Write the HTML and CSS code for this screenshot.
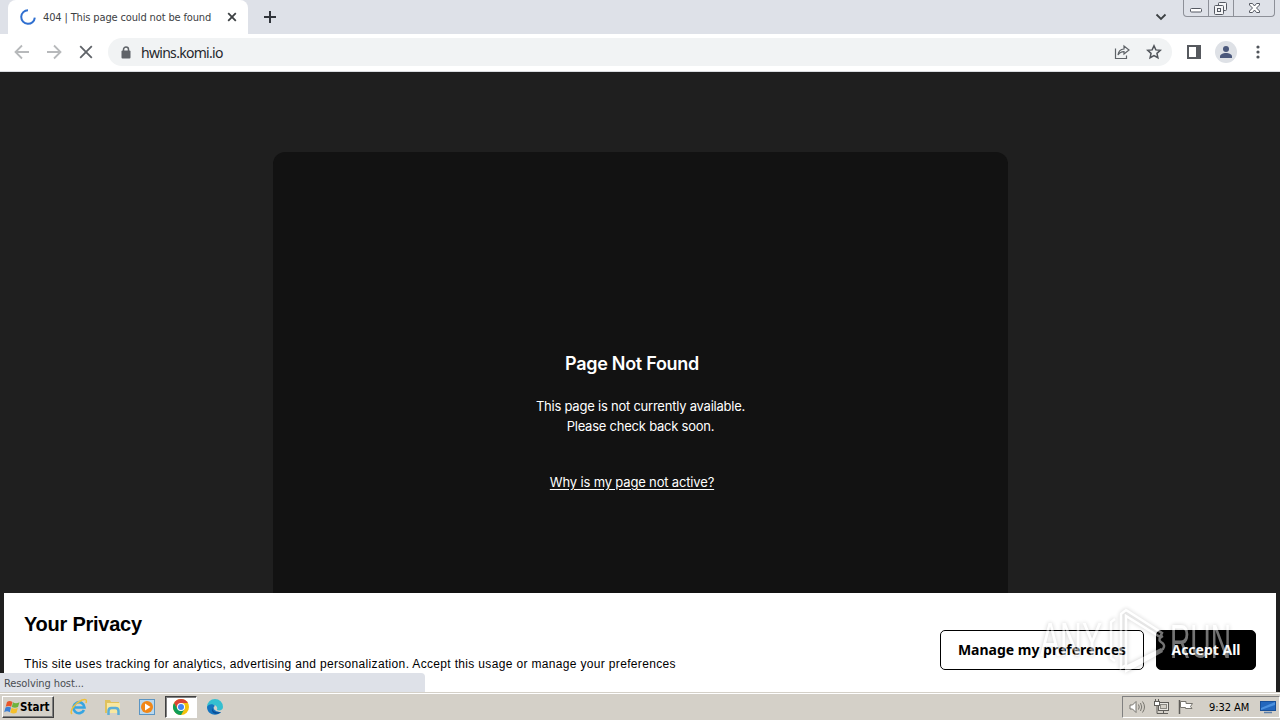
FILE: index.html
```html
<!DOCTYPE html>
<html lang="en">
<head>
    <meta charset="UTF-8">
    <title>404 | This page could not be found</title>
    <link rel="stylesheet" href="styles.css">
</head>
<body>
    <div class="tab-strip">
        <div class="tab">
            <svg class="spinner" width="16" height="16" viewBox="0 0 16 16"><path d="M8 1.200A6.800 6.800 0 1 0 14.800 8.600" fill="none" stroke="#2f6fd0" stroke-width="2"/></svg>
            <span class="tab-title">404 | This page could not be found</span>
            <svg class="tab-close" width="10" height="10" viewBox="0 0 10 10"><path d="M1.200 1.200l7.600 7.600M8.800 1.200L1.200 8.800" stroke="#3c4043" stroke-width="1.800"/></svg>
        </div>
        <svg class="new-tab" width="12" height="12" viewBox="0 0 12 12"><path d="M6 0v12M0 6h12" stroke="#30343a" stroke-width="2"/></svg>
        <svg class="tab-search" width="12" height="8" viewBox="0 0 12 8"><path d="M1.500 1.500L6 6l4.500-4.500" fill="none" stroke="#3c4043" stroke-width="1.800"/></svg>
        <div class="window-buttons">
            <span><svg width="24" height="16" viewBox="0 0 24 16"><rect x="6.500" y="8.500" width="11" height="3.500" rx="1" fill="#fff" stroke="#555962"/></svg></span>
            <span><svg width="24" height="16" viewBox="0 0 24 16"><g fill="#f4f5f7" stroke="#555962"><rect x="9.500" y="2.500" width="8" height="8" rx="1"/><rect x="5.500" y="5.500" width="9" height="9" rx="1"/><rect x="8.500" y="8.500" width="3" height="3"/></g></svg></span>
            <span><svg width="40" height="16" viewBox="0 0 40 16"><path d="M15.500 3.500h3l2 2.500 2-2.500h3v1.500l-3 3 3 3v1.500h-3l-2-2.500-2 2.500h-3V11l3-3-3-3z" fill="#fff" stroke="#555962"/></svg></span>
        </div>
    </div>

    <div class="toolbar">
        <svg width="16" height="16" viewBox="0 0 16 16"><path d="M15 8H2M8 1.500L1.500 8 8 14.500" fill="none" stroke="#b7b9bb" stroke-width="1.800"/></svg>
        <svg width="16" height="16" viewBox="0 0 16 16"><path d="M1 8h13M8 1.500L14.500 8 8 14.500" fill="none" stroke="#b7b9bb" stroke-width="1.800"/></svg>
        <svg width="16" height="16" viewBox="0 0 16 16"><path d="M2.200 2.200l11.600 11.600M13.800 2.200L2.200 13.800" stroke="#5f6368" stroke-width="1.800"/></svg>
        <div class="address">
            <svg class="lock" width="10" height="13" viewBox="0 0 10 13"><path d="M2.500 6V3.500a2.500 2.500 0 0 1 5 0V6" fill="none" stroke="#5f6368" stroke-width="1.500"/><rect x="0.500" y="4.500" width="9" height="8" rx="1" fill="#5f6368"/></svg>
            <span class="url">hwins.komi.io</span>
            <svg class="share" width="16" height="16" viewBox="0 0 16 16"><path d="M1.500 4.500v10h11v-3M4 11c.5-4 2.500-5.800 6-6V2l5 4-5 4V7.700c-2.500 0-4.500.9-6 3.300z" fill="none" stroke="#5f6368" stroke-width="1.200"/></svg>
            <svg class="star" width="16" height="16" viewBox="0 0 16 16"><path d="M8 1.800l1.850 4.100 4.450.45-3.350 3 .95 4.400L8 11.500l-3.900 2.250.95-4.400-3.350-3 4.450-.45z" fill="none" stroke="#50545a" stroke-width="1.500"/></svg>
        </div>
        <svg class="side-panel" width="14" height="14" viewBox="0 0 14 14"><path d="M0 0h14v14H0zM2 2v10h7V2z" fill="#56595e" fill-rule="evenodd"/></svg>
        <svg class="profile" width="22" height="22" viewBox="0 0 22 22"><circle cx="11" cy="11" r="11" fill="#dee1e6"/><circle cx="11" cy="8" r="3" fill="#4b587c"/><path d="M5 17v-1.500c0-2 3-3.500 6-3.500s6 1.500 6 3.500V17z" fill="#4b587c"/></svg>
        <svg class="menu" width="4" height="14" viewBox="0 0 4 14"><g fill="#50545a"><circle cx="2" cy="2" r="1.600"/><circle cx="2" cy="7" r="1.600"/><circle cx="2" cy="12" r="1.600"/></g></svg>
    </div>

    <div class="page">
        <div class="card">
            <h1>Page Not Found</h1>
            <p>This page is not currently available.<br>Please check back soon.</p>
            <a class="why">Why is my page not active?</a>
        </div>

        <div class="privacy">
            <div class="privacy-text">
                <h2>Your Privacy</h2>
                <p>This site uses tracking for analytics, advertising and personalization. Accept this usage or manage your preferences</p>
            </div>
            <div class="btn manage">Manage my preferences</div>
            <div class="btn accept">Accept All</div>
        </div>

        <div class="status">Resolving host...</div>

        <svg class="watermark" width="220" height="74" viewBox="0 0 220 74">
            <text x="4" y="51" textLength="62" lengthAdjust="spacingAndGlyphs">ANY</text>
            <text x="134" y="53" textLength="61" lengthAdjust="spacingAndGlyphs">RUN</text>
            <path class="fold" d="M89 61l36-18 2 4-38 21z"/>
            <path d="M79 14l-4 3v36l4 3M85 60V9l5-4 36 23-2 4-34-21v49l-5 3zM127 31q-6 3-2 6 5 3 2 7l-34 19"/>
        </svg>
    </div>

    <div class="taskbar">
        <div class="start">
            <svg width="16" height="16" viewBox="0 0 16 16"><path d="M3 3q2.500-2 5.500 0L7.200 7.800Q4.500 6 1.700 7.800z" fill="#e8562a"/><path d="M9 3.300q2.500 1.700 6.500 0L14 8q-3 1.500-6.200 0z" fill="#6fb33b"/><path d="M1.500 8.500q2.500-1.500 5.500 0L5.800 13.200Q3 11.500.2 13.200z" fill="#3b7fd4"/><path d="M7.600 8.800q2.500 1.700 6.200.2L12.500 13.800q-3 1.500-6.200-.2z" fill="#f5bf2b"/></svg>
            <span>Start</span>
        </div>
        <div class="apps">
            <svg width="18" height="18" viewBox="0 0 18 18"><path d="M14 12A5.500 5.500 0 1 1 14.500 9.500H5" fill="none" stroke="#36a5e2" stroke-width="2.600"/><path d="M2 16C-1 13 5 5 12 2c4-1.500 5 0 4 3" fill="none" stroke="#efc038" stroke-width="1.500"/></svg>
            <svg width="18" height="18" viewBox="0 0 18 18"><path d="M1 2h5l1 2h8v11H1z" fill="#e0c25c"/><path d="M3 5h13v10H3z" fill="#f8e7a0"/><path d="M4.500 17v-4q0-3 3-3h4q3 0 3 3v4" fill="none" stroke="#5aaed8" stroke-width="2.500"/></svg>
            <svg width="18" height="18" viewBox="0 0 18 18"><rect x="1.500" y="1.500" width="15" height="15" fill="#b9d8ee" stroke="#5b95c3"/><circle cx="9" cy="9" r="6" fill="#f18717"/><path d="M7 5.500l5.500 3.500L7 12.500z" fill="#fff"/></svg>
            <div class="app-active"><svg width="18" height="18" viewBox="0 0 18 18"><circle cx="9" cy="9" r="8" fill="#f4c20d"/><path d="M2.070 5A8 8 0 0 1 15.930 5H9L5.500 11z" fill="#db4437"/><path d="M2.070 5A8 8 0 0 0 9 17l3.500-6h-7z" fill="#0f9d58"/><circle cx="9" cy="9" r="4" fill="#fff"/><circle cx="9" cy="9" r="3" fill="#4285f4"/></svg></div>
            <svg width="18" height="18" viewBox="0 0 18 18"><path d="M1 9a8 8 0 0 1 16 0c0 3-3 4-6 3 1-3-1-5-4-5-3 0-5 1-6 3z" fill="#35bfd0"/><path d="M1 9c1-3 6-4 8-1-3 1-1 6 6 6-4 5-14 3-14-5z" fill="#1474bf"/><path d="M7 8.500c-2 3 1 7 8 5.500-4 4-12 1-8-5.500z" fill="#0b4e96"/></svg>
        </div>
        <div class="tray">
            <svg width="17" height="16" viewBox="0 0 17 16"><path d="M1 6h2.500L7 2.500v11L3.500 10H1z" fill="#fff" stroke="#77756f"/><path d="M9.500 5.500q1.500 2.500 0 5M11.500 4q2.500 4 0 8M13.500 2.500q4 5.500 0 11" fill="none" stroke="#77756f"/></svg>
            <svg width="16" height="16" viewBox="0 0 16 16"><rect x="4.500" y="3.500" width="10" height="8" fill="#e9e7e2" stroke="#5f5d59"/><rect x="6.500" y="5.500" width="6" height="4" fill="#d4d0c8" stroke="#8b8983"/><path d="M6 14.500h8M9.500 12v2M1.500 0v3M4.500 0v3M3 6v8.500h3" fill="none" stroke="#5f5d59"/><rect x="0.500" y="2.500" width="5" height="4" fill="#fff" stroke="#5f5d59"/></svg>
            <svg width="17" height="16" viewBox="0 0 17 16"><path d="M1.500 1v14" stroke="#5f5d59" stroke-width="1.500"/><path d="M2.500 2.500H8v2h6.500l-2 3 1.500 2H7.500v-1h-5z" fill="#fff" stroke="#77756f"/></svg>
            <span class="clock">9:32 AM</span>
            <svg width="16" height="14" viewBox="0 0 16 14"><rect x="0.500" y="1.500" width="15" height="9" fill="#2367bd" stroke="#174f99"/><path d="M1 8L15 2v3L1 10z" fill="#4b91df"/><path d="M4 12.500h8" stroke="#5d7fa8" stroke-width="1.500"/></svg>
        </div>
    </div>
</body>
</html>
```

FILE: styles.css
```css
* {
    box-sizing: border-box;
}

body {
    margin: 0;
    width: 1280px;
    height: 720px;
    overflow: hidden;
    display: flex;
    flex-direction: column;
    font-family: "Liberation Sans", Arial, sans-serif;
    white-space: nowrap;
}

svg {
    display: block;
    flex: none;
}

h1, h2, p {
    margin: 0;
}

/* Browser tabs */
.tab-strip {
    height: 34px;
    flex: none;
    display: flex;
    background-color: #dee1e8;
    padding-left: 8px;
}

.tab {
    width: 240px;
    height: 34px;
    display: flex;
    align-items: center;
    background-color: #ffffff;
    border-radius: 8px 8px 0 0;
    padding-left: 12px;
}

.tab-title {
    width: 184px;
    margin-left: 7px;
    font-family: "DejaVu Sans Condensed", "DejaVu Sans", sans-serif;
    font-stretch: condensed;
    font-size: 11px;
    letter-spacing: -0.14px;
    color: #3c4043;
}

.new-tab {
    margin: 11px 0 0 16px;
}

.tab-search {
    margin: 13px 16px 0 auto;
}

.window-buttons {
    display: flex;
    height: 17px;
    margin-right: 5px;
    border: 1px solid #8d9098;
    border-top: none;
    border-radius: 0 0 4px 4px;
}

.window-buttons span + span {
    border-left: 1px solid #8d9098;
}

/* Address bar */
.toolbar {
    height: 38px;
    flex: none;
    display: flex;
    align-items: center;
    gap: 16px;
    padding-left: 14px;
    padding-bottom: 1px;
    background-color: #ffffff;
    border-bottom: 1px solid #dadce0;
}

.address {
    width: 1064px;
    height: 28px;
    margin-left: -2px;
    display: flex;
    align-items: center;
    border-radius: 14px;
    background-color: #f1f3f4;
    padding-left: 13px;
}

.url {
    margin-left: 10px;
    font-family: "Noto Sans", sans-serif;
    font-size: 14px;
    letter-spacing: -0.7px;
    color: #26282c;
}

.share {
    margin-left: auto;
}

.star {
    margin: 0 10px 0 16px;
}

.side-panel {
    margin-left: -1px;
}

.profile {
    margin-left: -2px;
}

.menu {
    margin-left: 3px;
}

/* Page content */
.page {
    position: relative;
    flex: 1;
    overflow: hidden;
    background-color: #1f1f1f;
    padding-top: 80px;
}

.card {
    width: 735px;
    height: 560px;
    margin-left: 273px;
    padding-top: 201px;
    border-radius: 12px;
    background-color: #121212;
    color: #ffffff;
    font-family: Inter, sans-serif;
}

.card h1 {
    width: 718px;
    font-size: 18px;
    line-height: 22px;
    font-weight: 600;
    letter-spacing: -0.28px;
    text-align: center;
}

.card p {
    margin-top: 21px;
    font-size: 13px;
    line-height: 20px;
    letter-spacing: -0.23px;
    text-align: center;
}

.why {
    display: block;
    width: 718px;
    margin-top: 36px;
    font-size: 13px;
    line-height: 20px;
    letter-spacing: -0.16px;
    text-align: center;
    text-decoration: underline;
    text-underline-offset: 2px;
}

.privacy {
    position: absolute;
    left: 4px;
    right: 4px;
    top: 521px;
    height: 99px;
    display: flex;
    align-items: flex-start;
    padding: 0 20px;
    background-color: #ffffff;
    color: #000000;
}

.privacy-text {
    flex: 1;
}

.privacy h2 {
    margin-top: 19px;
    font-size: 20px;
    line-height: 24px;
    font-weight: bold;
    letter-spacing: -0.25px;
}

.privacy p {
    margin-top: 20px;
    font-size: 12px;
    line-height: 16px;
    letter-spacing: 0.335px;
}

.btn {
    height: 40px;
    margin-top: 37px;
    display: flex;
    align-items: center;
    justify-content: center;
    border: 1px solid #000000;
    border-radius: 5px;
    padding-bottom: 2px;
    font-family: "Noto Sans", sans-serif;
    font-size: 14px;
    font-weight: bold;
}

.manage {
    width: 204px;
    margin-right: 12px;
}

.accept {
    width: 100px;
    background-color: #000000;
    color: #ffffff;
}

.status {
    position: absolute;
    left: 0;
    bottom: 0;
    width: 425px;
    height: 19px;
    padding-left: 4px;
    border-top-right-radius: 4px;
    background-color: #dee1e8;
    color: #4a4d52;
    font-family: "DejaVu Sans Condensed", "DejaVu Sans", sans-serif;
    font-stretch: condensed;
    font-size: 11px;
    line-height: 21px;
    letter-spacing: -0.1px;
}

.watermark {
    position: absolute;
    left: 1036px;
    top: 533px;
    filter: drop-shadow(0 0 2px rgba(0, 0, 0, 0.45));
    opacity: 0.45;
}

.watermark text {
    font-family: "Liberation Sans", Arial, sans-serif;
    font-size: 48px;
    fill: #ffffff;
}

.watermark path {
    fill: none;
    stroke: #ffffff;
    stroke-width: 2.5;
}

.watermark .fold {
    fill: #ffffff;
    stroke: none;
}

/* Windows taskbar */
.taskbar {
    height: 28px;
    flex: none;
    display: flex;
    align-items: center;
    background-color: #d4d0c8;
    box-shadow: inset 0 1px #d4d0c8, inset 0 2px #ffffff;
    padding-top: 2px;
}

.start {
    width: 52px;
    height: 22px;
    margin-left: 2px;
    display: flex;
    align-items: center;
    border: 1px solid;
    border-color: #ffffff #404040 #404040 #ffffff;
    box-shadow: inset -1px -1px #808080;
    padding-left: 1px;
    font-family: "DejaVu Sans Condensed", "DejaVu Sans", sans-serif;
    font-stretch: condensed;
    font-size: 11.5px;
    font-weight: bold;
}

.apps {
    display: flex;
    align-items: center;
    gap: 16px;
    margin-left: 16px;
}

.app-active {
    width: 32px;
    height: 22px;
    margin: 0 -7px;
    display: flex;
    align-items: center;
    justify-content: center;
    background-color: #ffffff;
    border: 1px solid;
    border-color: #404040 #ffffff #ffffff #404040;
    box-shadow: inset 1px 1px #808080;
}

.tray {
    width: 158px;
    height: 22px;
    margin-left: auto;
    display: flex;
    align-items: center;
    gap: 8px;
    border: 1px solid;
    border-color: #808080 #ffffff #ffffff #808080;
    padding-left: 6px;
}

.clock {
    width: 41px;
    margin: 0 2px 0 6px;
    font-family: "DejaVu Sans Condensed", "DejaVu Sans", sans-serif;
    font-stretch: condensed;
    font-size: 11px;
    letter-spacing: -0.05px;
}
```
